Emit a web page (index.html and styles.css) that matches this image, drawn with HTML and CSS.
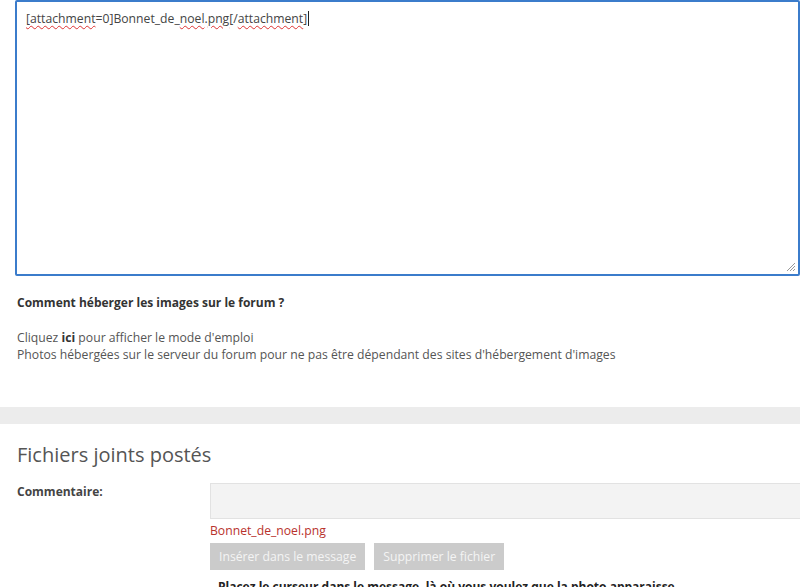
FILE: index.html
```html
<!DOCTYPE html>
<html lang="fr">
<head>
<meta charset="utf-8">
<link rel="stylesheet" href="styles.css">
</head>
<body>
<div class="page">
  <div class="editor">
    <div class="editor-text"><span class="sp">[attachment</span>=0]Bonnet_de_<span class="sp">noel</span>.<span class="sp">png</span>[/<span class="sp">attachment</span>]<span class="caret"></span></div>
    <svg class="grip" width="10" height="10" viewBox="0 0 10 10"><path d="M9 1L1 9M9 4L4 9M9 7L7 9" stroke="#999" stroke-width="1"/></svg>
  </div>
  <div class="help">
    <p class="help-title">Comment héberger les images sur le forum ?</p>
    <p class="help-text">Cliquez <b>ici</b> pour afficher le mode d'emploi<br>Photos hébergées sur le serveur du forum pour ne pas être dépendant des sites d'hébergement d'images</p>
  </div>
  <div class="band"></div>
  <section class="attach">
    <h2 class="attach-title">Fichiers joints postés</h2>
    <div class="row">
      <div class="label">Commentaire:</div>
      <div class="field">
        <div class="comment-box"></div>
        <div class="filename">Bonnet_de_noel.png</div>
        <div class="buttons">
          <span class="btn">Insérer dans le message</span>
          <span class="btn">Supprimer le fichier</span>
        </div>
        <p class="hint">Placez le curseur dans le message, là où vous voulez que la photo apparaisse</p>
      </div>
    </div>
  </section>
</div>
</body>
</html>
```
FILE: styles.css
```css
html, body {
  margin: 0;
  padding: 0;
  background: #fff;
  overflow: hidden;
}
body {
  font-family: "Open Sans", "Noto Sans", sans-serif;
  color: #444;
}
.page {
  width: 800px;
  height: 587px;
  overflow: hidden;
}
.editor {
  position: relative;
  margin-left: 15px;
  width: 785px;
  height: 276px;
  box-sizing: border-box;
  border: 2px solid #3b7ccb;
  border-radius: 2px;
}
.editor-text {
  padding: 8px 9px;
  font-size: 12.2px;
  line-height: 18px;
  color: #444;
}
.sp {
  text-decoration: underline wavy #d33;
  text-decoration-thickness: 1px;
  text-underline-offset: 2px;
}
.caret {
  display: inline-block;
  width: 1px;
  height: 15px;
  background: #222;
  vertical-align: -3px;
  margin-left: 1px;
}
.grip {
  position: absolute;
  right: 2px;
  bottom: 2px;
}
.help {
  padding: 19px 17px 0;
}
.help-title {
  margin: 0 0 18px;
  font-size: 12px;
  font-weight: 700;
  color: #333;
  line-height: 16px;
}
.help-text {
  margin: 0;
  font-size: 12.2px;
  line-height: 17px;
  color: #555;
}
.help-text b {
  color: #333;
}
.band {
  margin-top: 44px;
  height: 17px;
  background: #ececec;
}
.attach {
  padding: 18px 17px 0;
}
.attach-title {
  margin: 0 0 15px;
  font-size: 20px;
  font-weight: 400;
  color: #555;
  line-height: 26px;
}
.row {
  display: flex;
}
.label {
  width: 193px;
  font-size: 12px;
  font-weight: 700;
  color: #444;
  line-height: 16px;
  padding-top: 1px;
}
.field {
  flex: 1;
  margin-right: -17px;
}
.comment-box {
  height: 36px;
  box-sizing: border-box;
  background: #f3f3f3;
  border: 1px solid #e2e2e2;
  border-right: none;
}
.filename {
  margin-top: 4px;
  font-size: 12.2px;
  line-height: 16px;
  color: #b8322d;
}
.buttons {
  display: flex;
  gap: 9px;
  margin-top: 4px;
}
.btn {
  background: #cbcbcb;
  color: #f4f4f4;
  font-size: 12.2px;
  line-height: 17px;
  padding: 5px 9px;
}
.hint {
  margin: 9px 0 0 8px;
  font-size: 12px;
  font-weight: 700;
  color: #222;
  line-height: 16px;
  white-space: nowrap;
}
```
